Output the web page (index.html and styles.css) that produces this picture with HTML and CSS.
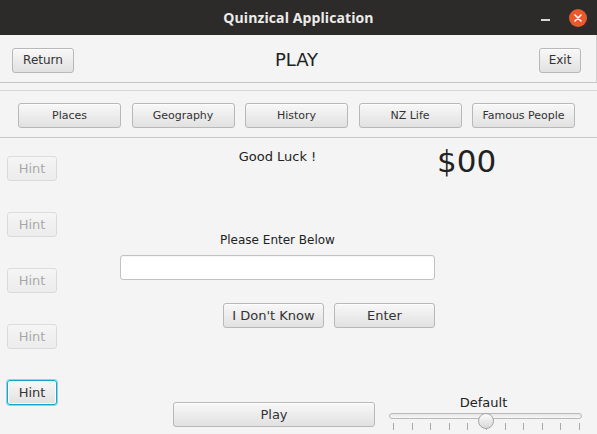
FILE: index.html
```html
<!DOCTYPE html>
<html>
<head>
<meta charset="utf-8">
<link rel="stylesheet" href="styles.css">
</head>
<body>
<div class="window">
  <div class="titlebar">
    <span class="title">Quinzical Application</span>
    <div class="controls">
      <span class="min"></span>
      <span class="close">
        <svg width="8" height="8" viewBox="0 0 8 8"><path d="M1 1L7 7M7 1L1 7" stroke="#fff" stroke-width="1.5" stroke-linecap="round"/></svg>
      </span>
    </div>
  </div>

  <div class="header">
    <button class="btn return">Return</button>
    <div class="heading">PLAY</div>
    <button class="btn exit">Exit</button>
  </div>

  <div class="categories">
    <button class="btn cat">Places</button>
    <button class="btn cat">Geography</button>
    <button class="btn cat">History</button>
    <button class="btn cat">NZ Life</button>
    <button class="btn cat">Famous People</button>
  </div>

  <div class="main">
    <div class="hints">
      <button class="btn hint disabled">Hint</button>
      <button class="btn hint disabled">Hint</button>
      <button class="btn hint disabled">Hint</button>
      <button class="btn hint disabled">Hint</button>
      <button class="btn hint focused">Hint</button>
    </div>
    <div class="content">
      <div class="top">
        <div class="luck">Good Luck !</div>
        <div class="score">$00</div>
      </div>
      <div class="answer">
        <div class="prompt">Please Enter Below</div>
        <div class="field"></div>
        <div class="actions">
          <button class="btn action">I Don't Know</button>
          <button class="btn action">Enter</button>
        </div>
      </div>
      <div class="bottom">
        <button class="btn play">Play</button>
        <div class="slider-box">
          <div class="slider-label">Default</div>
          <div class="slider">
            <div class="track"></div>
            <div class="thumb"></div>
            <div class="ticks">
              <span></span><span></span><span></span><span></span><span></span><span></span><span></span><span></span><span></span><span></span><span></span>
            </div>
          </div>
        </div>
      </div>
    </div>
  </div>
</div>
</body>
</html>
```

FILE: styles.css
```css
html, body {
  margin: 0;
  padding: 0;
}
body {
  width: 597px;
  height: 434px;
  overflow: hidden;
  background: #f4f4f4;
  font-family: "DejaVu Sans", sans-serif;
  color: #333;
}
.window {
  width: 597px;
  height: 434px;
}

/* title bar */
.titlebar {
  height: 35px;
  background: #2c2b2a;
  display: grid;
  grid-template-columns: 1fr auto 1fr;
  align-items: center;
}
.title {
  grid-column: 2;
  color: #eeeceb;
  font: 700 14px "Open Sans", sans-serif;
  letter-spacing: 0.1px;
}
.controls {
  grid-column: 3;
  justify-self: end;
  display: flex;
  align-items: center;
  gap: 19px;
  padding-right: 10px;
}
.min {
  width: 9px;
  height: 2px;
  background: #d8d8d8;
  margin-top: 5px;
}
.close {
  width: 18px;
  height: 18px;
  border-radius: 50%;
  background: #e85a2b;
  display: flex;
  align-items: center;
  justify-content: center;
}

/* buttons */
.btn {
  box-sizing: border-box;
  height: 25px;
  padding: 0;
  margin: 0;
  border: 1px solid #b8b8b8;
  border-radius: 3px;
  background: linear-gradient(#f8f8f8, #e1e1e1);
  box-shadow: inset 0 1px 0 #fdfdfd;
  font-family: "DejaVu Sans", sans-serif;
  font-size: 13px;
  color: #333;
  line-height: 1;
}

/* header */
.header {
  box-sizing: border-box;
  height: 48px;
  padding: 3px 15px 0 12px;
  display: grid;
  grid-template-columns: 1fr auto 1fr;
  align-items: center;
  border-bottom: 1px solid #c6c6c6;
  border-right: 1px solid #cfcfcf;
}
.return {
  width: 62px;
  font-size: 12px;
  justify-self: start;
}
.exit {
  width: 42px;
  font-size: 12px;
  justify-self: end;
}
.heading {
  font-size: 18px;
  line-height: 22px;
  color: #222;
}

/* categories */
.categories {
  margin-top: 7px;
  padding: 12px 0 9px 18px;
  display: flex;
  gap: 10.5px;
  border-top: 1px solid #d6d6d6;
  border-bottom: 1px solid #c8c8c8;
}
.cat {
  width: 103px;
  font-size: 11px;
}

/* main area */
.main {
  display: flex;
}
.hints {
  margin-left: 7px;
  padding-top: 18px;
  width: 50px;
  display: flex;
  flex-direction: column;
  gap: 31px;
}
.hint {
  width: 50px;
}
.hint.disabled {
  opacity: 0.4;
}
.hint.focused {
  border-color: #1aa3cf;
  box-shadow: 0 0 0 1px #8fd3ea, inset 0 0 0 1px #ffffff;
}

.content {
  flex: 1;
  display: flex;
  flex-direction: column;
}
.top {
  display: flex;
  align-items: flex-start;
  padding-top: 5px;
  margin-left: 63px;
}
.luck {
  width: 315px;
  margin-top: 6px;
  text-align: center;
  font-size: 13px;
  line-height: 15px;
  color: #222;
}
.score {
  margin-left: 2px;
  font-size: 31px;
  line-height: 36px;
  color: #222;
}

.answer {
  margin-left: 63px;
  width: 315px;
  display: flex;
  flex-direction: column;
}
.prompt {
  margin-top: 54px;
  text-align: center;
  font-size: 12px;
  line-height: 15px;
  color: #222;
}
.field {
  box-sizing: border-box;
  margin-top: 7px;
  height: 25px;
  background: #fff;
  border: 1px solid #c2c2c2;
  border-radius: 3px;
  box-shadow: inset 0 1px 1px rgba(0,0,0,0.04);
}
.actions {
  margin-top: 23px;
  display: flex;
  justify-content: flex-end;
  gap: 10px;
}
.action {
  width: 101px;
}

.bottom {
  margin-top: 67px;
  display: flex;
  align-items: flex-start;
}
.play {
  margin-left: 116px;
  margin-top: 7px;
  width: 202px;
}
.slider-box {
  margin-left: 14px;
  width: 193px;
}
.slider-label {
  text-align: center;
  font-size: 13px;
  line-height: 15px;
  color: #222;
  padding-right: 4px;
}
.slider {
  position: relative;
  margin-top: -1px;
  height: 25px;
}
.track {
  box-sizing: border-box;
  margin-top: 4px;
  height: 6px;
  border: 1px solid #b9b9b9;
  border-radius: 3px;
  background: linear-gradient(#e6e6e6, #f7f7f7);
}
.thumb {
  position: absolute;
  left: 89px;
  top: 0;
  box-sizing: border-box;
  width: 16px;
  height: 16px;
  border-radius: 50%;
  border: 1px solid #a5a5a5;
  background: linear-gradient(#fbfbfb, #d9d9d9);
}
.ticks {
  margin-top: 4px;
  padding: 0 2px 0 4px;
  display: flex;
  justify-content: space-between;
}
.ticks span {
  width: 1px;
  height: 7px;
  background: #a9a9a9;
}
```
